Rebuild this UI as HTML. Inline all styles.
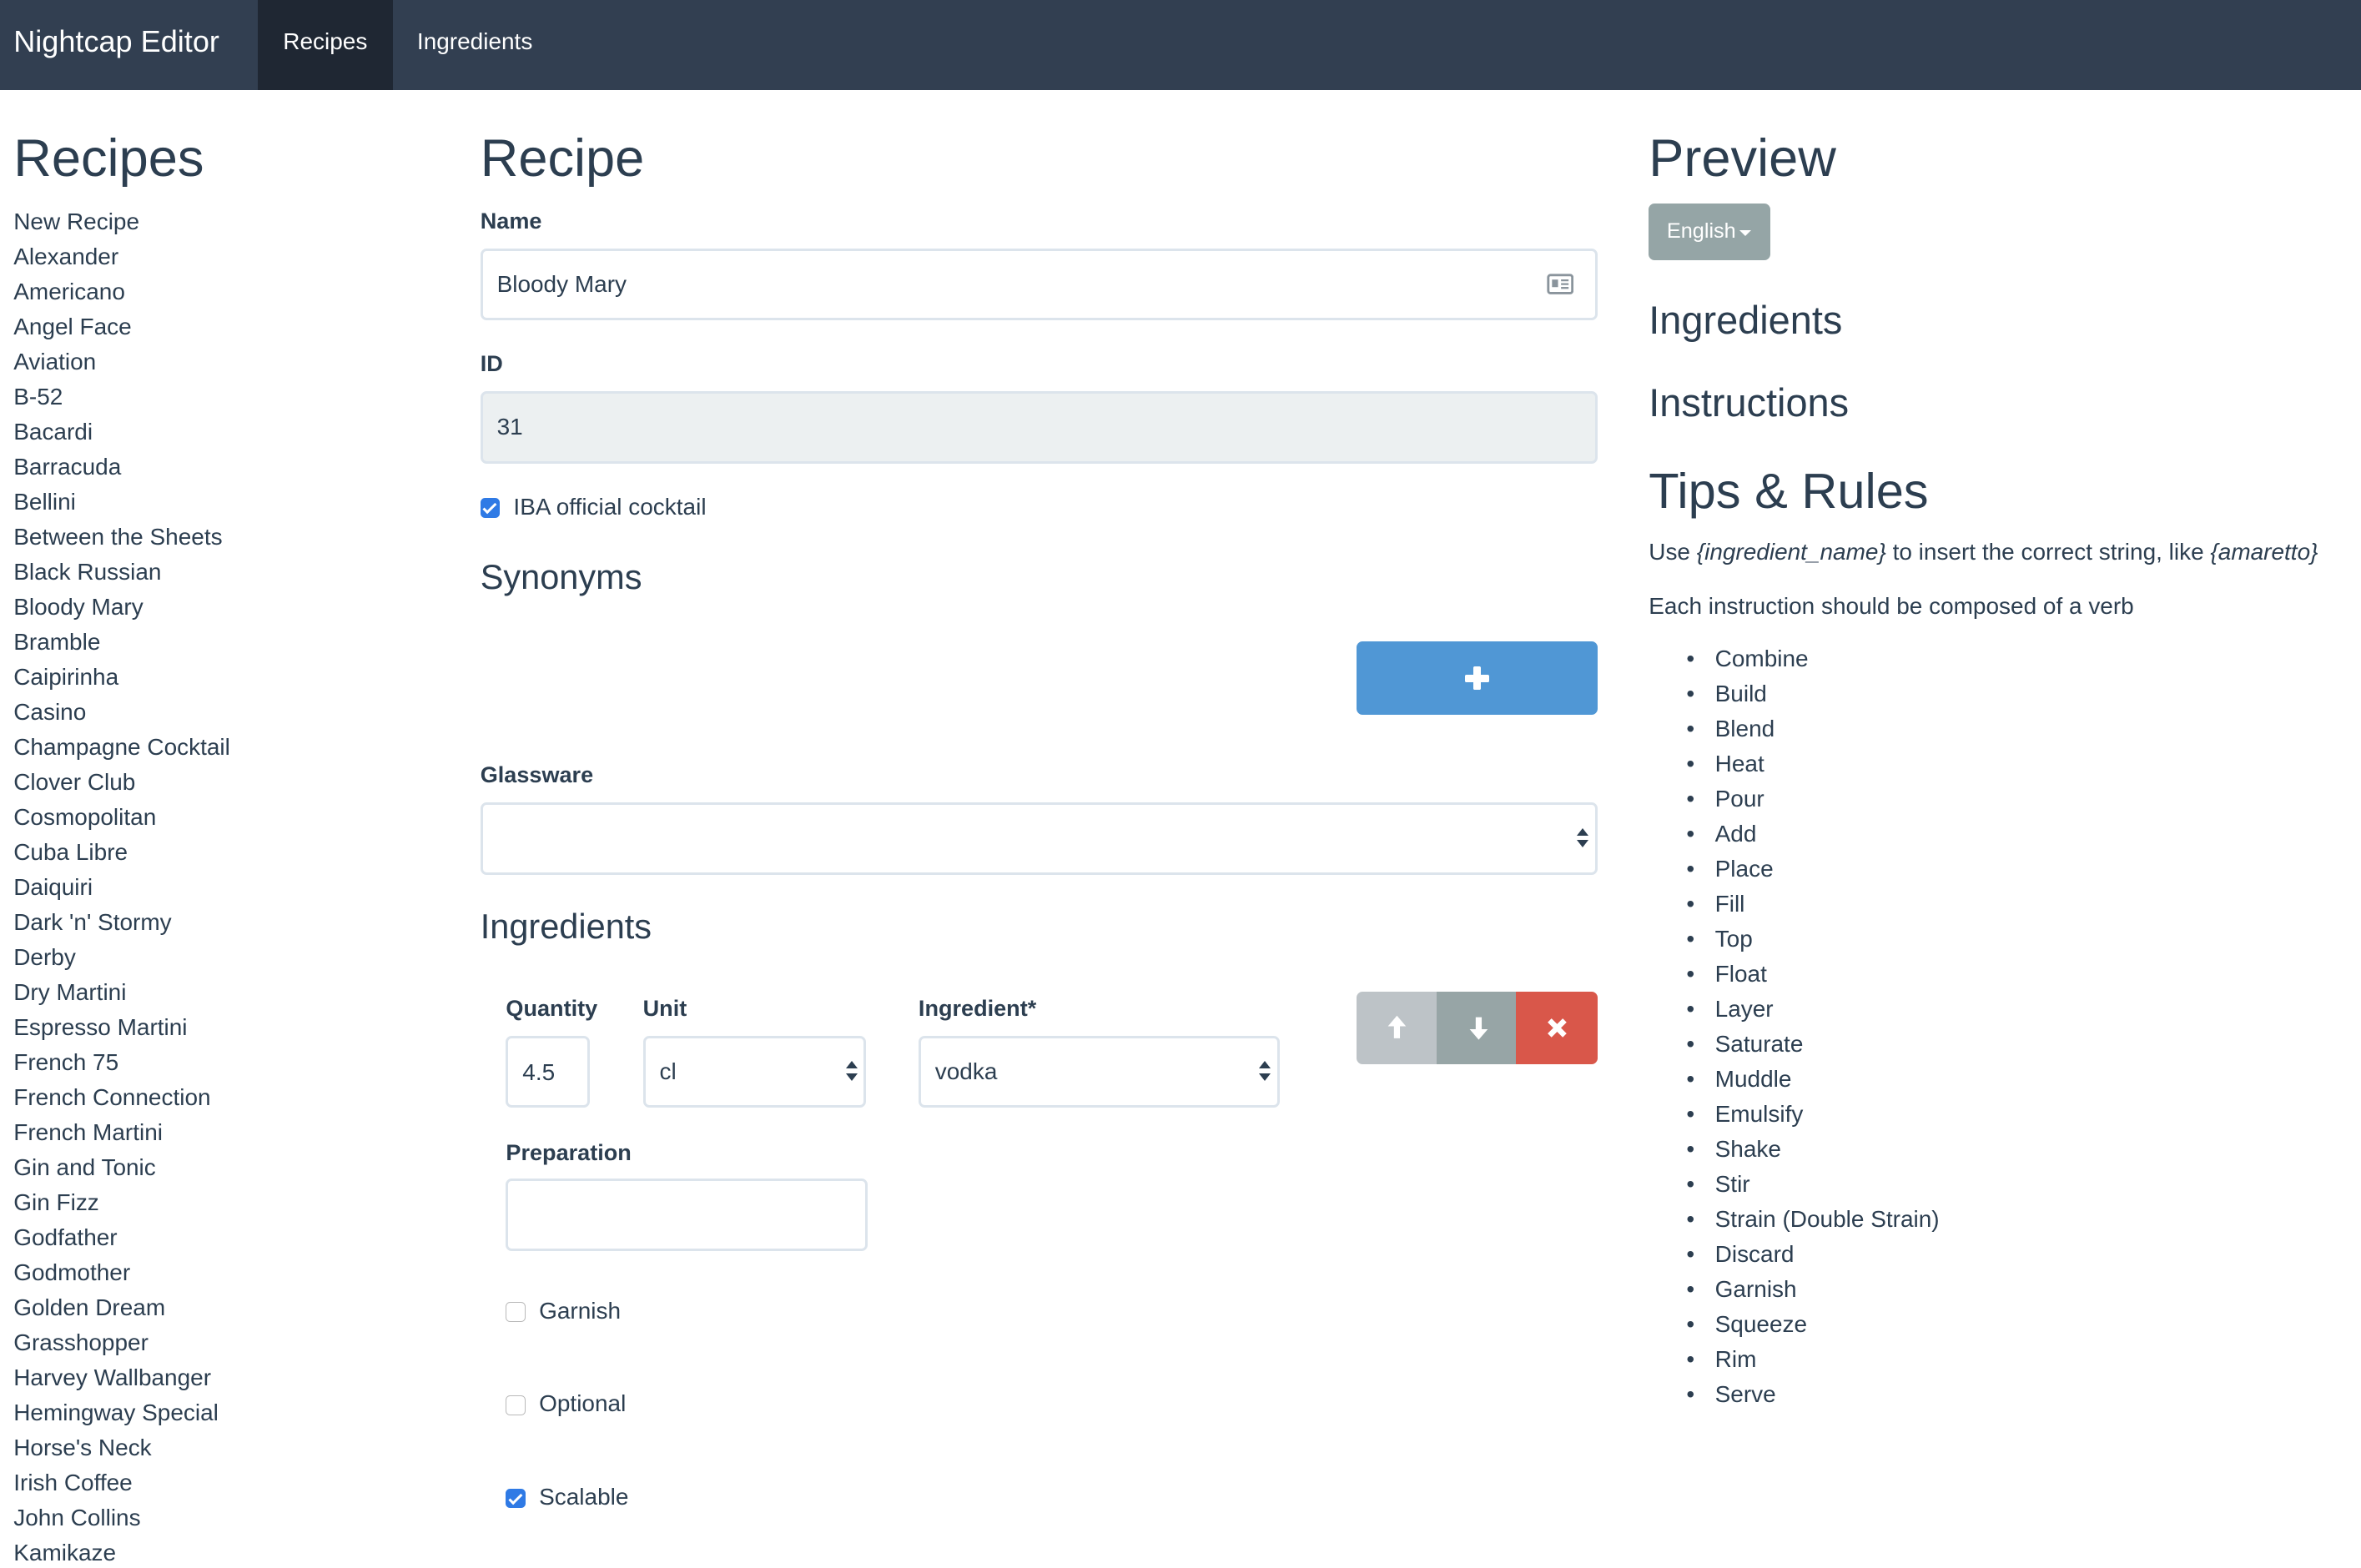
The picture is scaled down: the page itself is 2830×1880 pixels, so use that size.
<!DOCTYPE html>
<html><head><meta charset="utf-8"><style>
*{margin:0;padding:0;box-sizing:border-box}
html,body{width:2830px;height:1880px;overflow:hidden;background:#fff}
#r{zoom:1.8048;width:1568px;height:1042px;position:relative;font-family:"Liberation Sans",sans-serif;color:#2c3e50;font-size:15.5px}
.a{position:absolute;white-space:nowrap;line-height:1}
.nav{position:absolute;left:0;top:0;width:1568px;height:60px;background:#323f51}
.h1{font-size:35px}
.h3{font-size:26px}
.h4{font-size:23px}
.lb{font-weight:bold;font-size:15px}
.box{position:absolute;border:2px solid #dce4ec;border-radius:4px;background:#fff}
.cb{position:absolute;width:13px;height:13px;border:1px solid #b9b9b9;border-radius:3px;background:#fff}
.cb.on{background:#2f7ae5;border-color:#2f7ae5}
.cb.on:after{content:"";position:absolute;left:3.5px;top:1px;width:3px;height:7px;border:solid #fff;border-width:0 2px 2px 0;transform:rotate(45deg)}
.arr{position:absolute;width:0;height:0;border-left:4px solid transparent;border-right:4px solid transparent}
</style></head><body><div id="r">
<div class="nav"></div>
<div class="a" style="left:171px;top:0;width:90px;height:60px;background:#1f2733"></div>
<div class="a" style="left:9px;top:18px;font-size:20px;color:#fff">Nightcap Editor</div>
<div class="a" style="left:188px;top:20px;font-size:15.5px;color:#fff">Recipes</div>
<div class="a" style="left:277px;top:20px;font-size:15.5px;color:#fff">Ingredients</div>

<div class="a h1" style="left:9px;top:88px">Recipes</div>
<div class="a" style="left:9px;top:136px;line-height:23.26px">
New Recipe<br>Alexander<br>Americano<br>Angel Face<br>Aviation<br>B-52<br>Bacardi<br>Barracuda<br>Bellini<br>Between the Sheets<br>Black Russian<br>Bloody Mary<br>Bramble<br>Caipirinha<br>Casino<br>Champagne Cocktail<br>Clover Club<br>Cosmopolitan<br>Cuba Libre<br>Daiquiri<br>Dark 'n' Stormy<br>Derby<br>Dry Martini<br>Espresso Martini<br>French 75<br>French Connection<br>French Martini<br>Gin and Tonic<br>Gin Fizz<br>Godfather<br>Godmother<br>Golden Dream<br>Grasshopper<br>Harvey Wallbanger<br>Hemingway Special<br>Horse's Neck<br>Irish Coffee<br>John Collins<br>Kamikaze</div>

<div class="a h1" style="left:319px;top:88px">Recipe</div>
<div class="a lb" style="left:319px;top:139px">Name</div>
<div class="box" style="left:319px;top:165px;width:742px;height:48px"></div>
<div class="a" style="left:330px;top:181px">Bloody Mary</div>
<svg class="a" style="left:1027px;top:182px" width="18" height="14" viewBox="0 0 18 14"><rect x="1" y="1" width="16" height="12" rx="1.5" fill="none" stroke="#8a949c" stroke-width="1.6"/><rect x="3.5" y="4" width="4" height="5" fill="#8a949c"/><path d="M9.5 4.5h5M9.5 7h5M9.5 9.5h5" stroke="#8a949c" stroke-width="1.3"/></svg>
<div class="a lb" style="left:319px;top:234px">ID</div>
<div class="box" style="left:319px;top:260px;width:742px;height:48px;background:#ecf0f1"></div>
<div class="a" style="left:330px;top:276px">31</div>
<div class="cb on" style="left:319px;top:331px"></div>
<div class="a" style="left:341px;top:329px">IBA official cocktail</div>
<div class="a h4" style="left:319px;top:372px">Synonyms</div>
<div class="a" style="left:901px;top:426px;width:160px;height:49px;background:#5097d5;border-radius:4px"></div>
<div class="a" style="left:973px;top:448px;width:16px;height:5px;background:#fff;border-radius:1px"></div>
<div class="a" style="left:978.5px;top:442.5px;width:5px;height:16px;background:#fff;border-radius:1px"></div>
<div class="a lb" style="left:319px;top:507px">Glassware</div>
<div class="box" style="left:319px;top:533px;width:742px;height:48px"></div>
<div class="arr" style="left:1047px;top:550px;border-bottom:5px solid #2c3e50"></div>
<div class="arr" style="left:1047px;top:558px;border-top:5px solid #2c3e50"></div>
<div class="a h4" style="left:319px;top:604px">Ingredients</div>
<div class="a lb" style="left:336px;top:662px">Quantity</div>
<div class="a lb" style="left:427px;top:662px">Unit</div>
<div class="a lb" style="left:610px;top:662px">Ingredient*</div>
<div class="box" style="left:336px;top:688px;width:56px;height:48px"></div>
<div class="a" style="left:347px;top:705px">4.5</div>
<div class="box" style="left:427px;top:688px;width:148px;height:48px"></div>
<div class="a" style="left:438px;top:704px">cl</div>
<div class="arr" style="left:562px;top:705px;border-bottom:5px solid #2c3e50"></div>
<div class="arr" style="left:562px;top:713px;border-top:5px solid #2c3e50"></div>
<div class="box" style="left:610px;top:688px;width:240px;height:48px"></div>
<div class="a" style="left:621px;top:704px">vodka</div>
<div class="arr" style="left:836px;top:705px;border-bottom:5px solid #2c3e50"></div>
<div class="arr" style="left:836px;top:713px;border-top:5px solid #2c3e50"></div>
<div class="a" style="left:901px;top:659px;width:53px;height:48px;background:#bdc3c7;border-radius:4px 0 0 4px"></div>
<div class="a" style="left:954px;top:659px;width:53px;height:48px;background:#97a5a6"></div>
<div class="a" style="left:1007px;top:659px;width:54px;height:48px;background:#d9574a;border-radius:0 4px 4px 0"></div>
<svg class="a" style="left:920px;top:674px" width="16" height="18" viewBox="0 0 16 18"><path d="M8 1L2 8h4v8h4V8h4z" fill="#fff"/></svg>
<svg class="a" style="left:974px;top:674px" width="16" height="18" viewBox="0 0 16 18"><path d="M8 17L2 10h4V2h4v8h4z" fill="#fff"/></svg>
<svg class="a" style="left:1026px;top:675px" width="16" height="16" viewBox="0 0 16 16"><path d="M3 3l10 10M13 3L3 13" stroke="#fff" stroke-width="3.6"/></svg>
<div class="a lb" style="left:336px;top:758px">Preparation</div>
<div class="box" style="left:336px;top:783px;width:240px;height:48px"></div>
<div class="cb" style="left:336px;top:865px"></div>
<div class="a" style="left:358px;top:863px">Garnish</div>
<div class="cb" style="left:336px;top:927px"></div>
<div class="a" style="left:358px;top:925px">Optional</div>
<div class="cb on" style="left:336px;top:989px"></div>
<div class="a" style="left:358px;top:987px">Scalable</div>

<div class="a h1" style="left:1095px;top:88px">Preview</div>
<div class="a" style="left:1095px;top:135px;width:81px;height:38px;background:#95a5a6;border-radius:4px"></div>
<div class="a" style="left:1107px;top:147px;color:#fff;font-size:14px">English</div>
<div class="arr" style="left:1155px;top:153px;border-top:4px solid #fff"></div>
<div class="a h3" style="left:1095px;top:200px">Ingredients</div>
<div class="a h3" style="left:1095px;top:255px">Instructions</div>
<div class="a" style="left:1095px;top:310px;font-size:33px">Tips &amp; Rules</div>
<div class="a" style="left:1095px;top:359px">Use <i>{ingredient_name}</i> to insert the correct string, like <i>{amaretto}</i></div>
<div class="a" style="left:1095px;top:395px">Each instruction should be composed of a verb</div>
<div class="a" style="left:1120px;top:426px;line-height:23.28px">
•<br>•<br>•<br>•<br>•<br>•<br>•<br>•<br>•<br>•<br>•<br>•<br>•<br>•<br>•<br>•<br>•<br>•<br>•<br>•<br>•<br>•</div>
<div class="a" style="left:1139px;top:426px;line-height:23.28px">Combine<br>Build<br>Blend<br>Heat<br>Pour<br>Add<br>Place<br>Fill<br>Top<br>Float<br>Layer<br>Saturate<br>Muddle<br>Emulsify<br>Shake<br>Stir<br>Strain (Double Strain)<br>Discard<br>Garnish<br>Squeeze<br>Rim<br>Serve</div>
</div></body></html>
